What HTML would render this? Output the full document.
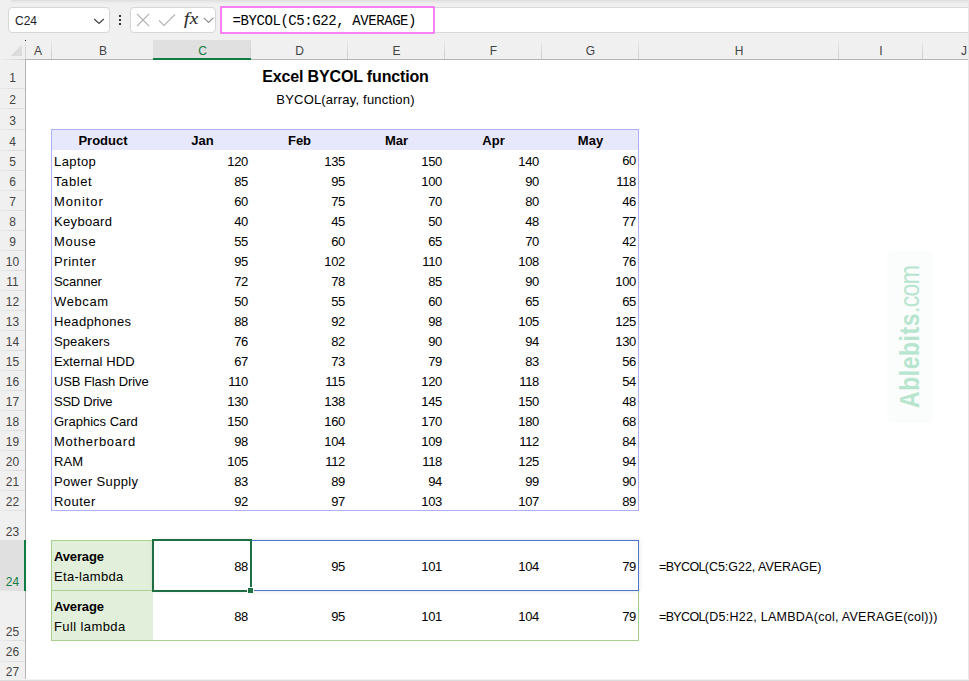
<!DOCTYPE html><html><head><meta charset="utf-8"><title>Excel BYCOL function</title><style>
html,body{margin:0;padding:0}
body{width:969px;height:681px;position:relative;overflow:hidden;background:#fff;font-family:"Liberation Sans",sans-serif;color:#000}
.abs{position:absolute}
#chrome{left:0;top:0;width:969px;height:60px;background:#f0f0f0}
#topshade{left:11px;top:0;width:958px;height:4px;background:linear-gradient(#dddddd,#e9e9e9 50%,#f0f0f0);border-bottom-left-radius:5px}
.box{background:#fff;border:1px solid #d6d6d6;border-radius:4px;box-sizing:border-box}
#namebox{left:8px;top:7px;width:102px;height:26px}
#nametxt{left:15px;top:13px;font-size:12px;line-height:16px;color:#222}
#iconbox{left:130px;top:7px;width:86px;height:26px}
#fbar{left:221px;top:7px;width:760px;height:26px;background:#fff;border:1px solid #d9d9d9;box-sizing:border-box}
#pink{left:220px;top:6px;width:215px;height:28px;border:2px solid #fa80f4;box-sizing:border-box;background:#fff;border-radius:1px}
#ftxt{left:232.5px;top:12px;font-family:"Liberation Mono",monospace;font-size:14px;letter-spacing:-0.42px;line-height:18px;color:#000;white-space:pre}
.ch{top:40px;height:19px;font-size:12px;line-height:22px;color:#444;text-align:center}
.chsep{top:41px;width:1px;height:18px;background:linear-gradient(rgba(208,208,208,0.2),#d2d2d2 70%)}
#chline{left:25px;top:59px;width:944px;height:1px;background:#b5b5b5}
#rhbg{left:0;top:60px;width:25px;height:621px;background:#f0f0f0}
#rhline{left:25px;top:60px;width:1px;height:621px;background:#b5b5b5}
.rh{left:0;width:25px;font-size:12px;color:#444;text-align:center;line-height:14px}
.rhsep{left:0;width:25px;height:1px;background:linear-gradient(90deg,rgba(222,222,222,0.3),#dedede 60%)}
.cell{font-size:13px;line-height:20px;white-space:nowrap}
.txt{letter-spacing:0.3px}
.num{text-align:right;letter-spacing:-0.35px}
.b{font-weight:bold}
</style></head><body>
<div id="chrome" class="abs"></div><div id="topshade" class="abs"></div>
<div id="namebox" class="abs box"></div><div id="nametxt" class="abs">C24</div>
<svg class="abs" style="left:93px;top:17px" width="12" height="8" viewBox="0 0 12 8"><path d="M1.2 2 L6 6.5 L10.8 2" fill="none" stroke="#444" stroke-width="1.2"/></svg>
<svg class="abs" style="left:118px;top:14px" width="4" height="12" viewBox="0 0 4 12"><rect x="1" y="1" width="2" height="2" fill="#333"/><rect x="1" y="5" width="2" height="2" fill="#333"/><rect x="1" y="9" width="2" height="2" fill="#333"/></svg>
<div id="iconbox" class="abs box"></div>
<svg class="abs" style="left:136px;top:13px" width="14" height="14" viewBox="0 0 14 14"><path d="M1 1 L13 13 M13 1 L1 13" fill="none" stroke="#b4b4b4" stroke-width="1.1"/></svg>
<svg class="abs" style="left:158px;top:13px" width="18" height="14" viewBox="0 0 18 14"><path d="M1 7.5 L6 12.5 L17 1.5" fill="none" stroke="#b4b4b4" stroke-width="1.1"/></svg>
<div class="abs" style="left:184px;top:9px;font-family:'Liberation Serif',serif;font-style:italic;font-size:16.5px;line-height:20px;color:#2b2b2b;-webkit-text-stroke:0.15px #2b2b2b;letter-spacing:0.5px;transform:scaleX(1.15);transform-origin:0 0">fx</div>
<svg class="abs" style="left:203px;top:17px" width="11" height="7" viewBox="0 0 11 7"><path d="M0.8 0.8 L5.5 5.5 L10.2 0.8" fill="none" stroke="#8a8a8a" stroke-width="1.1"/></svg>
<div id="fbar" class="abs"></div><div id="pink" class="abs"></div><div id="ftxt" class="abs">=BYCOL(C5:G22, AVERAGE)</div>
<svg class="abs" style="left:10px;top:44px" width="13" height="13" viewBox="0 0 13 13"><path d="M12 0.5 L12 12 L0.5 12 Z" fill="#dcdcdc"/></svg>
<div class="abs" style="left:25px;top:40px;width:1px;height:1px;background:#222"></div>
<div class="abs" style="left:25px;top:44px;width:1px;height:16px;background:#d4d4d4"></div>
<div class="abs ch" style="left:25px;width:26px;">A</div>
<div class="abs chsep" style="left:51px"></div>
<div class="abs ch" style="left:52px;width:102px;">B</div>
<div class="abs chsep" style="left:153px"></div>
<div class="abs" style="left:153px;width:98px;top:40px;height:19px;background:#e0e0e0"></div>
<div class="abs ch" style="left:154px;width:97px;color:#107c41;">C</div>
<div class="abs chsep" style="left:250px"></div>
<div class="abs ch" style="left:251px;width:97px;">D</div>
<div class="abs chsep" style="left:347px"></div>
<div class="abs ch" style="left:348px;width:97px;">E</div>
<div class="abs chsep" style="left:444px"></div>
<div class="abs ch" style="left:445px;width:97px;">F</div>
<div class="abs chsep" style="left:541px"></div>
<div class="abs ch" style="left:542px;width:97px;">G</div>
<div class="abs chsep" style="left:638px"></div>
<div class="abs ch" style="left:639px;width:200px;">H</div>
<div class="abs chsep" style="left:838px"></div>
<div class="abs ch" style="left:839px;width:84px;">I</div>
<div class="abs chsep" style="left:922px"></div>
<div class="abs ch" style="left:922px;width:84px;">J</div>
<div id="chline" class="abs"></div>
<div class="abs" style="left:0;top:59px;width:25px;height:1px;background:linear-gradient(90deg,rgba(200,200,200,0),rgba(200,200,200,0.8))"></div>
<div class="abs" style="left:153px;top:58px;width:98px;height:2px;background:#107c41"></div>
<div id="rhbg" class="abs"></div>
<div class="abs" style="left:0;top:540px;width:25px;height:50px;background:#e0e0e0"></div>
<div class="abs rh" style="top:71px;">1</div>
<div class="abs rhsep" style="top:88px"></div>
<div class="abs rh" style="top:93px;">2</div>
<div class="abs rhsep" style="top:108px"></div>
<div class="abs rh" style="top:114px;">3</div>
<div class="abs rhsep" style="top:129px"></div>
<div class="abs rh" style="top:135px;">4</div>
<div class="abs rhsep" style="top:150px"></div>
<div class="abs rh" style="top:155px;">5</div>
<div class="abs rhsep" style="top:170px"></div>
<div class="abs rh" style="top:175px;">6</div>
<div class="abs rhsep" style="top:190px"></div>
<div class="abs rh" style="top:195px;">7</div>
<div class="abs rhsep" style="top:210px"></div>
<div class="abs rh" style="top:215px;">8</div>
<div class="abs rhsep" style="top:230px"></div>
<div class="abs rh" style="top:235px;">9</div>
<div class="abs rhsep" style="top:250px"></div>
<div class="abs rh" style="top:255px;">10</div>
<div class="abs rhsep" style="top:270px"></div>
<div class="abs rh" style="top:275px;">11</div>
<div class="abs rhsep" style="top:290px"></div>
<div class="abs rh" style="top:295px;">12</div>
<div class="abs rhsep" style="top:310px"></div>
<div class="abs rh" style="top:315px;">13</div>
<div class="abs rhsep" style="top:330px"></div>
<div class="abs rh" style="top:335px;">14</div>
<div class="abs rhsep" style="top:350px"></div>
<div class="abs rh" style="top:355px;">15</div>
<div class="abs rhsep" style="top:370px"></div>
<div class="abs rh" style="top:375px;">16</div>
<div class="abs rhsep" style="top:390px"></div>
<div class="abs rh" style="top:395px;">17</div>
<div class="abs rhsep" style="top:410px"></div>
<div class="abs rh" style="top:415px;">18</div>
<div class="abs rhsep" style="top:430px"></div>
<div class="abs rh" style="top:435px;">19</div>
<div class="abs rhsep" style="top:450px"></div>
<div class="abs rh" style="top:455px;">20</div>
<div class="abs rhsep" style="top:470px"></div>
<div class="abs rh" style="top:475px;">21</div>
<div class="abs rhsep" style="top:490px"></div>
<div class="abs rh" style="top:495px;">22</div>
<div class="abs rhsep" style="top:510px"></div>
<div class="abs rh" style="top:525px;">23</div>
<div class="abs rhsep" style="top:540px"></div>
<div class="abs rh" style="top:575px;color:#107c41;">24</div>
<div class="abs rhsep" style="top:590px"></div>
<div class="abs rh" style="top:625px;">25</div>
<div class="abs rhsep" style="top:640px"></div>
<div class="abs rh" style="top:645px;">26</div>
<div class="abs rhsep" style="top:661px"></div>
<div class="abs rh" style="top:665px;">27</div>
<div id="rhline" class="abs"></div>
<div class="abs" style="left:24px;top:540px;width:2px;height:51px;background:#107c41"></div>
<div class="abs b" style="left:153px;width:385px;top:65px;font-size:16px;letter-spacing:-0.15px;line-height:24px;text-align:center">Excel BYCOL function</div>
<div class="abs" style="left:153px;width:385px;top:90px;letter-spacing:0.19px;font-size:13px;line-height:20px;text-align:center">BYCOL(array, function)</div>
<div class="abs" style="left:51px;top:129px;width:588px;height:382px;border:1px solid #b0b0fa;box-sizing:border-box"></div>
<div class="abs" style="left:52px;top:130px;width:586px;height:20px;background:#e8e8fd"></div>
<div class="abs cell b" style="left:52px;width:102px;top:131px;height:20px;text-align:center">Product</div>
<div class="abs cell b" style="left:154px;width:97px;top:131px;height:20px;text-align:center">Jan</div>
<div class="abs cell b" style="left:251px;width:97px;top:131px;height:20px;text-align:center">Feb</div>
<div class="abs cell b" style="left:348px;width:97px;top:131px;height:20px;text-align:center">Mar</div>
<div class="abs cell b" style="left:445px;width:97px;top:131px;height:20px;text-align:center">Apr</div>
<div class="abs cell b" style="left:542px;width:97px;top:131px;height:20px;text-align:center">May</div>
<div class="abs cell " style="left:54px;width:99px;top:152px;height:20px;letter-spacing:0.4px">Laptop</div>
<div class="abs cell num" style="left:153px;width:95px;top:152px;height:20px;">120</div>
<div class="abs cell num" style="left:250px;width:95px;top:152px;height:20px;">135</div>
<div class="abs cell num" style="left:347px;width:95px;top:152px;height:20px;">150</div>
<div class="abs cell num" style="left:444px;width:95px;top:152px;height:20px;">140</div>
<div class="abs cell num" style="left:541px;width:95px;top:151px;height:20px;">60</div>
<div class="abs cell " style="left:54px;width:99px;top:172px;height:20px;letter-spacing:0.58px">Tablet</div>
<div class="abs cell num" style="left:153px;width:95px;top:172px;height:20px;">85</div>
<div class="abs cell num" style="left:250px;width:95px;top:172px;height:20px;">95</div>
<div class="abs cell num" style="left:347px;width:95px;top:172px;height:20px;">100</div>
<div class="abs cell num" style="left:444px;width:95px;top:172px;height:20px;">90</div>
<div class="abs cell num" style="left:541px;width:95px;top:172px;height:20px;">118</div>
<div class="abs cell " style="left:54px;width:99px;top:192px;height:20px;letter-spacing:0.9px">Monitor</div>
<div class="abs cell num" style="left:153px;width:95px;top:192px;height:20px;">60</div>
<div class="abs cell num" style="left:250px;width:95px;top:192px;height:20px;">75</div>
<div class="abs cell num" style="left:347px;width:95px;top:192px;height:20px;">70</div>
<div class="abs cell num" style="left:444px;width:95px;top:192px;height:20px;">80</div>
<div class="abs cell num" style="left:541px;width:95px;top:192px;height:20px;">46</div>
<div class="abs cell " style="left:54px;width:99px;top:212px;height:20px;letter-spacing:0.33px">Keyboard</div>
<div class="abs cell num" style="left:153px;width:95px;top:212px;height:20px;">40</div>
<div class="abs cell num" style="left:250px;width:95px;top:212px;height:20px;">45</div>
<div class="abs cell num" style="left:347px;width:95px;top:212px;height:20px;">50</div>
<div class="abs cell num" style="left:444px;width:95px;top:212px;height:20px;">48</div>
<div class="abs cell num" style="left:541px;width:95px;top:212px;height:20px;">77</div>
<div class="abs cell " style="left:54px;width:99px;top:232px;height:20px;letter-spacing:0.68px">Mouse</div>
<div class="abs cell num" style="left:153px;width:95px;top:232px;height:20px;">55</div>
<div class="abs cell num" style="left:250px;width:95px;top:232px;height:20px;">60</div>
<div class="abs cell num" style="left:347px;width:95px;top:232px;height:20px;">65</div>
<div class="abs cell num" style="left:444px;width:95px;top:232px;height:20px;">70</div>
<div class="abs cell num" style="left:541px;width:95px;top:232px;height:20px;">42</div>
<div class="abs cell " style="left:54px;width:99px;top:252px;height:20px;letter-spacing:0.57px">Printer</div>
<div class="abs cell num" style="left:153px;width:95px;top:252px;height:20px;">95</div>
<div class="abs cell num" style="left:250px;width:95px;top:252px;height:20px;">102</div>
<div class="abs cell num" style="left:347px;width:95px;top:252px;height:20px;">110</div>
<div class="abs cell num" style="left:444px;width:95px;top:252px;height:20px;">108</div>
<div class="abs cell num" style="left:541px;width:95px;top:252px;height:20px;">76</div>
<div class="abs cell " style="left:54px;width:99px;top:272px;height:20px;letter-spacing:-0.08px">Scanner</div>
<div class="abs cell num" style="left:153px;width:95px;top:272px;height:20px;">72</div>
<div class="abs cell num" style="left:250px;width:95px;top:272px;height:20px;">78</div>
<div class="abs cell num" style="left:347px;width:95px;top:272px;height:20px;">85</div>
<div class="abs cell num" style="left:444px;width:95px;top:272px;height:20px;">90</div>
<div class="abs cell num" style="left:541px;width:95px;top:272px;height:20px;">100</div>
<div class="abs cell " style="left:54px;width:99px;top:292px;height:20px;letter-spacing:0.6px">Webcam</div>
<div class="abs cell num" style="left:153px;width:95px;top:292px;height:20px;">50</div>
<div class="abs cell num" style="left:250px;width:95px;top:292px;height:20px;">55</div>
<div class="abs cell num" style="left:347px;width:95px;top:292px;height:20px;">60</div>
<div class="abs cell num" style="left:444px;width:95px;top:292px;height:20px;">65</div>
<div class="abs cell num" style="left:541px;width:95px;top:292px;height:20px;">65</div>
<div class="abs cell " style="left:54px;width:99px;top:312px;height:20px;letter-spacing:0.36px">Headphones</div>
<div class="abs cell num" style="left:153px;width:95px;top:312px;height:20px;">88</div>
<div class="abs cell num" style="left:250px;width:95px;top:312px;height:20px;">92</div>
<div class="abs cell num" style="left:347px;width:95px;top:312px;height:20px;">98</div>
<div class="abs cell num" style="left:444px;width:95px;top:312px;height:20px;">105</div>
<div class="abs cell num" style="left:541px;width:95px;top:312px;height:20px;">125</div>
<div class="abs cell " style="left:54px;width:99px;top:332px;height:20px;letter-spacing:0.11px">Speakers</div>
<div class="abs cell num" style="left:153px;width:95px;top:332px;height:20px;">76</div>
<div class="abs cell num" style="left:250px;width:95px;top:332px;height:20px;">82</div>
<div class="abs cell num" style="left:347px;width:95px;top:332px;height:20px;">90</div>
<div class="abs cell num" style="left:444px;width:95px;top:332px;height:20px;">94</div>
<div class="abs cell num" style="left:541px;width:95px;top:332px;height:20px;">130</div>
<div class="abs cell " style="left:54px;width:99px;top:352px;height:20px;letter-spacing:0.1px">External HDD</div>
<div class="abs cell num" style="left:153px;width:95px;top:352px;height:20px;">67</div>
<div class="abs cell num" style="left:250px;width:95px;top:352px;height:20px;">73</div>
<div class="abs cell num" style="left:347px;width:95px;top:352px;height:20px;">79</div>
<div class="abs cell num" style="left:444px;width:95px;top:352px;height:20px;">83</div>
<div class="abs cell num" style="left:541px;width:95px;top:352px;height:20px;">56</div>
<div class="abs cell " style="left:54px;width:99px;top:372px;height:20px;letter-spacing:-0.1px">USB Flash Drive</div>
<div class="abs cell num" style="left:153px;width:95px;top:372px;height:20px;">110</div>
<div class="abs cell num" style="left:250px;width:95px;top:372px;height:20px;">115</div>
<div class="abs cell num" style="left:347px;width:95px;top:372px;height:20px;">120</div>
<div class="abs cell num" style="left:444px;width:95px;top:372px;height:20px;">118</div>
<div class="abs cell num" style="left:541px;width:95px;top:372px;height:20px;">54</div>
<div class="abs cell " style="left:54px;width:99px;top:392px;height:20px;letter-spacing:-0.26px">SSD Drive</div>
<div class="abs cell num" style="left:153px;width:95px;top:392px;height:20px;">130</div>
<div class="abs cell num" style="left:250px;width:95px;top:392px;height:20px;">138</div>
<div class="abs cell num" style="left:347px;width:95px;top:392px;height:20px;">145</div>
<div class="abs cell num" style="left:444px;width:95px;top:392px;height:20px;">150</div>
<div class="abs cell num" style="left:541px;width:95px;top:392px;height:20px;">48</div>
<div class="abs cell " style="left:54px;width:99px;top:412px;height:20px;letter-spacing:0.0px">Graphics Card</div>
<div class="abs cell num" style="left:153px;width:95px;top:412px;height:20px;">150</div>
<div class="abs cell num" style="left:250px;width:95px;top:412px;height:20px;">160</div>
<div class="abs cell num" style="left:347px;width:95px;top:412px;height:20px;">170</div>
<div class="abs cell num" style="left:444px;width:95px;top:412px;height:20px;">180</div>
<div class="abs cell num" style="left:541px;width:95px;top:412px;height:20px;">68</div>
<div class="abs cell " style="left:54px;width:99px;top:432px;height:20px;letter-spacing:0.74px">Motherboard</div>
<div class="abs cell num" style="left:153px;width:95px;top:432px;height:20px;">98</div>
<div class="abs cell num" style="left:250px;width:95px;top:432px;height:20px;">104</div>
<div class="abs cell num" style="left:347px;width:95px;top:432px;height:20px;">109</div>
<div class="abs cell num" style="left:444px;width:95px;top:432px;height:20px;">112</div>
<div class="abs cell num" style="left:541px;width:95px;top:432px;height:20px;">84</div>
<div class="abs cell " style="left:54px;width:99px;top:452px;height:20px;letter-spacing:0.1px">RAM</div>
<div class="abs cell num" style="left:153px;width:95px;top:452px;height:20px;">105</div>
<div class="abs cell num" style="left:250px;width:95px;top:452px;height:20px;">112</div>
<div class="abs cell num" style="left:347px;width:95px;top:452px;height:20px;">118</div>
<div class="abs cell num" style="left:444px;width:95px;top:452px;height:20px;">125</div>
<div class="abs cell num" style="left:541px;width:95px;top:452px;height:20px;">94</div>
<div class="abs cell " style="left:54px;width:99px;top:472px;height:20px;letter-spacing:0.35px">Power Supply</div>
<div class="abs cell num" style="left:153px;width:95px;top:472px;height:20px;">83</div>
<div class="abs cell num" style="left:250px;width:95px;top:472px;height:20px;">89</div>
<div class="abs cell num" style="left:347px;width:95px;top:472px;height:20px;">94</div>
<div class="abs cell num" style="left:444px;width:95px;top:472px;height:20px;">99</div>
<div class="abs cell num" style="left:541px;width:95px;top:472px;height:20px;">90</div>
<div class="abs cell " style="left:54px;width:99px;top:492px;height:20px;letter-spacing:0.46px">Router</div>
<div class="abs cell num" style="left:153px;width:95px;top:492px;height:20px;">92</div>
<div class="abs cell num" style="left:250px;width:95px;top:492px;height:20px;">97</div>
<div class="abs cell num" style="left:347px;width:95px;top:492px;height:20px;">103</div>
<div class="abs cell num" style="left:444px;width:95px;top:492px;height:20px;">107</div>
<div class="abs cell num" style="left:541px;width:95px;top:492px;height:20px;">89</div>
<div class="abs" style="left:51px;top:540px;width:588px;height:101px;border:1px solid #a9d08e;box-sizing:border-box"></div>
<div class="abs" style="left:52px;top:541px;width:101px;height:99px;background:#e2efda"></div>
<div class="abs" style="left:52px;top:590px;width:101px;height:1px;background:#a9d08e"></div>
<div class="abs cell b" style="left:54px;top:547px;letter-spacing:-0.15px">Average</div>
<div class="abs cell txt" style="left:54px;top:567px">Eta-lambda</div>
<div class="abs cell b" style="left:54px;top:597px;letter-spacing:-0.15px">Average</div>
<div class="abs cell" style="left:54px;top:617px;letter-spacing:0.4px">Full lambda</div>
<div class="abs cell num" style="left:153px;width:95px;top:557px;height:20px;">88</div>
<div class="abs cell num" style="left:153px;width:95px;top:607px;height:20px;">88</div>
<div class="abs cell num" style="left:250px;width:95px;top:557px;height:20px;">95</div>
<div class="abs cell num" style="left:250px;width:95px;top:607px;height:20px;">95</div>
<div class="abs cell num" style="left:347px;width:95px;top:557px;height:20px;">101</div>
<div class="abs cell num" style="left:347px;width:95px;top:607px;height:20px;">101</div>
<div class="abs cell num" style="left:444px;width:95px;top:557px;height:20px;">104</div>
<div class="abs cell num" style="left:444px;width:95px;top:607px;height:20px;">104</div>
<div class="abs cell num" style="left:541px;width:95px;top:557px;height:20px;">79</div>
<div class="abs cell num" style="left:541px;width:95px;top:607px;height:20px;">79</div>
<div class="abs" style="left:153px;top:540px;width:486px;height:51px;border:1px solid #4a74c9;box-sizing:border-box;box-shadow:0 0 5px rgba(0,0,0,0.13)"></div>
<div class="abs" style="left:152px;top:539px;width:100px;height:53px;border:2px solid #1e6f43;box-sizing:border-box;background:#fff"></div>
<div class="abs" style="left:247px;top:587px;width:5px;height:5px;background:#1e6f43;border:1px solid #fff;box-sizing:content-box"></div>
<div class="abs cell num" style="left:153px;width:95px;top:557px;height:20px;">88</div>
<div class="abs cell " style="left:659px;width:310px;top:557px;height:20px;font-size:12.5px;letter-spacing:-0.03px"><span style="letter-spacing:-0.65px">=BYCOL</span>(C5:G22, AVERAGE)</div>
<div class="abs cell " style="left:659px;width:310px;top:607px;height:20px;font-size:12.5px;letter-spacing:0.27px"><span style="letter-spacing:-0.65px">=BYCOL</span>(D5:H22, LAMBDA(col, AVERAGE(col)))</div>
<div class="abs" style="left:887px;top:251px;width:46px;height:172px;background:#fafdfb;border-radius:6px"></div>
<div class="abs" id="wm" style="left:896px;top:408px;transform-origin:0 0;transform:rotate(-90deg) scaleX(0.836);font-size:27.5px;line-height:27px;color:#b7e5cf;white-space:nowrap"><span class="b" style="letter-spacing:0.65px">Ablebits</span><span style="letter-spacing:-0.8px">.com</span></div>
<div class="abs" style="left:968px;top:0;width:1px;height:681px;background:#e6e6e6"></div>
<div class="abs" style="left:0;top:679px;width:969px;height:1px;background:#f2f2f2"></div><div class="abs" style="left:0;top:680px;width:969px;height:1px;background:#dcdcdc"></div>
</body></html>
